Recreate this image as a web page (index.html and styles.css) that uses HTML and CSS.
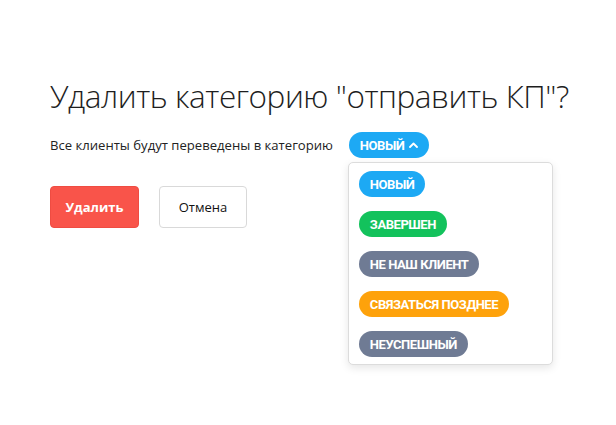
FILE: index.html
```html
<!DOCTYPE html>
<html lang="ru">
<head>
<meta charset="utf-8">
<link rel="stylesheet" href="styles.css">
</head>
<body>
<div class="dialog">
  <h1 class="title">Удалить категорию "отправить КП"?</h1>
  <div class="row">
    <span class="text">Все клиенты будут переведены в категорию</span>
    <div class="select">
      <button class="pill pill-blue pill-toggle">НОВЫЙ
        <svg class="chev" width="9" height="6" viewBox="0 0 9 6"><path d="M1 5 L4.5 1.5 L8 5" fill="none" stroke="#fff" stroke-width="1.8" stroke-linecap="round" stroke-linejoin="round"/></svg>
      </button>
      <div class="menu">
        <span class="pill pill-blue">НОВЫЙ</span>
        <span class="pill pill-green">ЗАВЕРШЕН</span>
        <span class="pill pill-gray">НЕ НАШ КЛИЕНТ</span>
        <span class="pill pill-orange">СВЯЗАТЬСЯ ПОЗДНЕЕ</span>
        <span class="pill pill-gray">НЕУСПЕШНЫЙ</span>
      </div>
    </div>
  </div>
  <div class="actions">
    <button class="btn btn-danger">Удалить</button>
    <button class="btn btn-default">Отмена</button>
  </div>
</div>
</body>
</html>
```
FILE: styles.css
```css
html, body {
  margin: 0;
  padding: 0;
  background: #fff;
  height: 100%;
}
.dialog {
  min-height: 100%;
  box-sizing: border-box;
  padding: 74px 0 0 50px;
  font-family: "Open Sans", "Noto Sans", sans-serif;
  color: #222;
}
.title {
  margin: 0;
  font-size: 31.5px;
  font-weight: 300;
  line-height: 44px;
  color: #1e1e1e;
  letter-spacing: -0.45px;
}
.row {
  display: flex;
  align-items: center;
  gap: 16px;
  margin-top: 14px;
}
.text {
  font-size: 13.1px;
  color: #222;
}
.select {
  position: relative;
  z-index: 5;
}
.pill {
  display: inline-flex;
  align-items: center;
  height: 26px;
  padding: 0 11px;
  border-radius: 13px;
  border: none;
  color: #fff;
  font-family: "Roboto", "Lato", sans-serif;
  font-weight: 700;
  font-size: 13px;
  letter-spacing: -0.45px;
  box-sizing: border-box;
  white-space: nowrap;
}
.pill-toggle {
  gap: 5px;
  padding: 0 11px 0 11px;
  cursor: pointer;
}
.chev { display: block; margin-top: -1px; }
.pill-blue { background: #1da9f4; }
.pill-green { background: #13c25c; }
.pill-gray { background: #6f7b94; }
.pill-orange { background: #fea20b; }
.menu {
  position: absolute;
  top: 30px;
  left: -1px;
  width: 205px;
  box-sizing: border-box;
  padding: 8px 10px 7px;
  border: 1px solid #dcdcdc;
  border-radius: 5px;
  background: #fff;
  box-shadow: 0 3px 8px rgba(0,0,0,0.1);
  display: flex;
  flex-direction: column;
  align-items: flex-start;
  gap: 14px;
}
.actions {
  display: flex;
  gap: 20px;
  margin-top: 28px;
}
.btn {
  height: 42px;
  border-radius: 4px;
  font-family: "Open Sans", "Noto Sans", sans-serif;
  font-size: 13px;
  box-sizing: border-box;
  cursor: pointer;
}
.btn-danger {
  width: 89px;
  background: #f9544a;
  border: 1px solid #ef4c42;
  color: #fff;
  font-weight: 700;
}
.btn-default {
  width: 88px;
  background: #fff;
  border: 1px solid #d9d9d9;
  color: #111;
  font-weight: 500;
}
```
